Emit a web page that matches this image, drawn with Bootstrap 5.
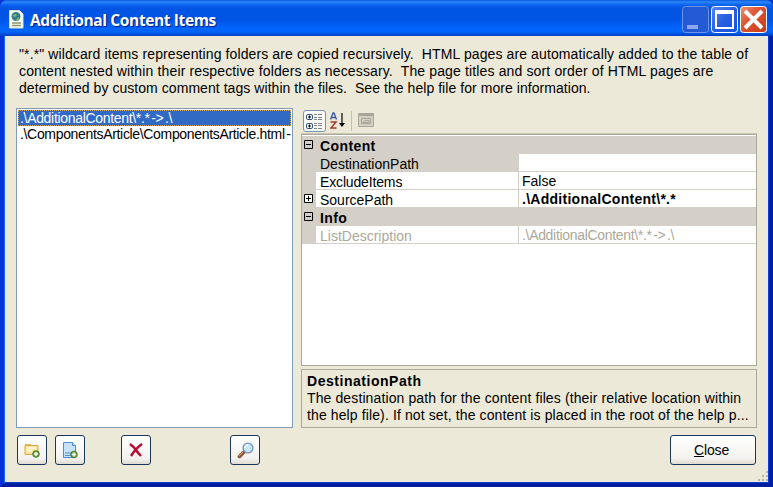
<!DOCTYPE html>
<html lang="en">
<head>
<meta charset="utf-8">
<meta name="viewport" content="width=device-width, initial-scale=1">
<title>Additional Content Items</title>
<link href="https://cdn.jsdelivr.net/npm/bootstrap@5.3.0/dist/css/bootstrap.min.css" rel="stylesheet">
<style>
  body { font: 14px/17px "Liberation Sans", Arial, sans-serif; color: #000; background: #0831d9; overflow: hidden; }
  svg { display: block; flex: none; }
  .dialog-window { width: 773px; height: 487px; background: #ece9d8; border: solid #0831d9; border-width: 0 4px 4px; border-color: #0831d9 #001ea0 #001ea0 #0831d9; border-radius: 7px 7px 0 0; box-shadow: inset 1px 0 #166aee, inset -1px 0 #0c3fd6, inset 0 -1px #0c3fd6; }
  .title-strip { height: 36px; margin: 0 -4px; padding: 0 5px 0 9px; border-radius: 7px 7px 0 0; background: linear-gradient(#0a5ce0 0, #2b85f8 2px, #0b62ee 5px, #0054e3 9px, #0055e5 20px, #0265fd 28px, #0264fa 32px, #0046cf 35px, #003cc4 36px); }
  .title-strip h1 { font: bold 15.5px/20px "Trebuchet MS", "Open Sans", sans-serif; color: #fff; text-shadow: 1px 1px 1px #0a1883; width: 192px; padding-top: 4px; margin-left: 5px; letter-spacing: -.37px; }
  .intro { height: 72px; padding: 10px 0 0 15px; }
  .intro div { height: 17px; white-space: pre; }
  .l1 { letter-spacing: .108px; }
  .l2 { letter-spacing: .14px; }
  .l3 { letter-spacing: .055px; }
  .panes { padding: 0 12px; gap: 8px; height: 320px; }
  .items { width: 277px; border: 1px solid #7f9db9; background: #fff; padding: 1px; }
  .items div { height: 16px; line-height: 16px; padding-left: 2px; white-space: pre; overflow: hidden; }
  .items .chosen { background: #316ac5; color: #fff; outline: 1px dotted #d8a050; outline-offset: -1px; }
  .i1 { letter-spacing: -.32px; word-spacing: -2px; }
  .i2 { letter-spacing: -.33px; word-spacing: -2px; }
  .inspector { width: 456px; }
  .tools { height: 26px; padding: 2px 0 0 2px; border-bottom: 1px solid #c9c6b6; }
  .tool-on { width: 23px; height: 22px; border: 1px solid #7892ae; border-radius: 3px; background: #fafaf7; }
  .tool-sep { width: 1px; height: 20px; background: #c5c2b4; margin: 1px 6px 0 6px; }
  .props { height: 232px; border: 1px solid #aca899; background: #fff; padding-top: 1px; }
  .prop { height: 18px; border-bottom: 1px solid #d4d0c8; }
  .gut { width: 14px; background: #d4d0c8; margin-bottom: -1px; padding: 4px 0 0 2px; }
  .key { width: 203px; padding: 2px 0 0 4px; line-height: 16px; border-right: 1px solid #d4d0c8; overflow: hidden; }
  .val { padding: 1px 0 0 3px; line-height: 16px; }
  .val.fw-bold { letter-spacing: .27px; }
  .shade, .shade .key, .key.shade { background: #d4d0c8; }
  .shade .key { font-weight: bold; letter-spacing: .4px; }
  .tight { letter-spacing: -.15px; }
  .dim { color: #aca899; }
  .help { height: 59px; margin-top: 3px; border: 1px solid #aca899; padding: 3px 0 0 5px; white-space: nowrap; letter-spacing: .115px; }
  .help .fw-bold { letter-spacing: .53px; }
  .actions { height: 37px; padding: 7px 13px 0; }
  .xp { padding: 0; height: 30px; width: 30px; border: 1px solid #17375e; border-radius: 3px; background: linear-gradient(#fff, #f3f2ee 80%, #dedbd0); color: #000; font-size: 14px; line-height: 17px; }
  .gap-a { margin-left: 8px; } .gap-b { margin-left: 36px; } .gap-c { margin-left: 79px; }
  .close-btn { width: 86px; letter-spacing: -.15px; padding-right: 3px; }
  .dialog-window > .grip { margin: 5px 0 0 753px; }
</style>
<script src="https://cdn.jsdelivr.net/npm/bootstrap@5.3.0/dist/js/bootstrap.bundle.min.js"></script>
</head>
<body>
<main class="dialog-window">
  <header class="title-strip d-flex align-items-center">
    <svg class="mt-1" width="16" height="20" viewBox="0 0 16 20"><path d="M.5.500h10l3.500 3.500v14H.5z" fill="#fffff0" stroke="#d9e2c8"/><circle cx="7" cy="6.500" r="4.500" fill="#367d90"/><path d="M4 5q3-2 4 0l-2 2-2-1zm3 4 3-2v2l-2 2z" fill="#70b96b"/><path d="M3 13h9M3 15.500h9" stroke="#8c9470" stroke-width="1.300"/></svg>
    <h1 class="mb-0 text-nowrap">Additional Content Items</h1>
    <svg class="ms-auto mt-1" width="86" height="28" viewBox="0 0 86 28">
      <defs><linearGradient id="blue" x2="1" y2="1"><stop stop-color="#5389ee"/><stop offset=".5" stop-color="#265fe0"/><stop offset="1" stop-color="#1552df"/></linearGradient><linearGradient id="red" x2="1" y2="1"><stop stop-color="#ee9273"/><stop offset=".4" stop-color="#df5434"/><stop offset="1" stop-color="#c63b13"/></linearGradient></defs>
      <rect x=".5" y=".5" width="26" height="26" rx="3" fill="#2359d4" stroke="#6d94ea"/><path d="M5 19h11v4H5z" fill="#8ca9f0"/>
      <rect x="29.500" y=".5" width="26" height="26" rx="3" fill="url(#blue)" stroke="#fff"/><path d="M33 4h19v19H33zM35 8v13h15V8z" fill="#fff" fill-rule="evenodd"/>
      <rect x="58.500" y=".5" width="26" height="26" rx="3" fill="url(#red)" stroke="#fff"/><path d="M63 5l17 17m0-17-17 17" stroke="#fff" stroke-width="4"/>
    </svg>
  </header>
  <section class="intro">
    <div class="l1">"*.*" wildcard items representing folders are copied recursively.  HTML pages are automatically added to the table of</div>
    <div class="l2">content nested within their respective folders as necessary.  The page titles and sort order of HTML pages are</div>
    <div class="l3">determined by custom comment tags within the files.  See the help file for more information.</div>
  </section>
  <div class="panes d-flex">
    <div class="items">
      <div class="chosen i1">.\AdditionalContent\*.* -&gt; .\</div>
      <div class="i2">.\ComponentsArticle\ComponentsArticle.html -</div>
    </div>
    <div class="inspector">
      <div class="tools d-flex">
        <div class="tool-on d-flex align-items-center justify-content-center"><svg width="17" height="17" viewBox="0 0 17 17"><g fill="#fff" stroke="#31517d"><rect x=".5" y="1.500" width="6" height="5" rx="1.500"/><rect x=".5" y="10.500" width="6" height="5" rx="1.500"/></g><path d="M2 4h3M3.500 2.500v3M2 13h3M3.500 11.500v3" stroke="#000"/><path d="M8 1.500h3M8 4.500h3M8 6.500h3M8 10.500h3M8 12.500h3M8 15.500h3M12 1.500h4M12 4.500h4M12 6.500h4M12 10.500h4M12 12.500h4M12 15.500h4" stroke="#858585"/></svg></div>
        <svg class="ms-1" width="15" height="19" viewBox="0 -2 15 19"><path d="M.5 7.500 3 1h1l2.500 6.500M1.500 5.500h4" fill="none" stroke="#3b55a5" stroke-width="1.300"/><path d="M.5 10H6l-5 6h5.500" fill="none" stroke="#a33b32" stroke-width="1.500"/><path d="M12 1v11" stroke="#000" stroke-width="1.200"/><path d="M9 11h6l-3 4z"/></svg>
        <div class="tool-sep"></div>
        <svg width="16" height="18" viewBox="0 -1 16 18"><path d="M.5 2.500h15v13H.5z" fill="#d3d0c3" stroke="#aaa799"/><path d="M1 4h14" stroke="#aaa799" stroke-width="2"/><path d="M3.500 7.500h9v5h-9zM5 11.500l2-2h4v2H5" fill="none" stroke="#aaa799"/></svg>
      </div>
      <div class="props">
        <div class="prop shade d-flex"><div class="gut"><svg width="9" height="9"><path d="M.5.500h8v8h-8zM2 4.500h5" fill="none" stroke="#000"/></svg></div><div class="key">Content</div></div>
        <div class="prop d-flex"><div class="gut"></div><div class="key shade">DestinationPath</div><div class="val"></div></div>
        <div class="prop d-flex"><div class="gut"></div><div class="key tight">ExcludeItems</div><div class="val">False</div></div>
        <div class="prop d-flex"><div class="gut"><svg width="9" height="9"><path d="M.5.500h8v8h-8zM2 4.500h5M4.500 2v5" fill="#fff" stroke="#000"/></svg></div><div class="key">SourcePath</div><div class="val fw-bold">.\AdditionalContent\*.*</div></div>
        <div class="prop shade d-flex"><div class="gut"><svg width="9" height="9"><path d="M.5.500h8v8h-8zM2 4.500h5" fill="none" stroke="#000"/></svg></div><div class="key">Info</div></div>
        <div class="prop d-flex dim"><div class="gut"></div><div class="key">ListDescription</div><div class="val i1">.\AdditionalContent\*.* -&gt; .\</div></div>
      </div>
      <div class="help"><div class="fw-bold">DestinationPath</div><div>The destination path for the content files (their relative location within</div><div>the help file). If not set, the content is placed in the root of the help p...</div></div>
    </div>
  </div>
  <footer class="actions d-flex">
    <button class="btn xp d-flex align-items-center justify-content-center" aria-label="Add folder"><svg width="16" height="16" viewBox="0 0 16 16"><path d="M1 3.500h13v9H1z" fill="#fbe5a2" stroke="#dda63c"/><path d="M1 3h6" stroke="#dda63c" stroke-width="1.500"/><path d="M3 6h9M3 8.500h5" stroke="#fffbe5" stroke-width="1.500"/><circle cx="12" cy="12" r="3.300" fill="#72a64b" stroke="#477c2b"/><path d="M10 12h4m-2-2v4" stroke="#fff" stroke-width="1.300"/></svg></button>
    <button class="btn xp gap-a d-flex align-items-center justify-content-center" aria-label="Add file"><svg width="16" height="17" viewBox="0 0 16 17"><path d="M1.500.500h9l3 3v12h-12z" fill="#c6e2ff" stroke="#4f8bd6"/><path d="M10.500.500v3h3" fill="#eef7ff" stroke="#4f8bd6"/><path d="M3 11h8M3 13.500h6" stroke="#4f8bd6"/><circle cx="12" cy="12.500" r="3.300" fill="#72a64b" stroke="#477c2b"/><path d="M10 12.500h4m-2-2v4" stroke="#fff" stroke-width="1.300"/></svg></button>
    <button class="btn xp gap-b d-flex align-items-center justify-content-center" aria-label="Delete"><svg width="14" height="14" viewBox="0 0 14 14"><path d="M1 1q4 3 6 6t5 6M13 1Q7 5 2 13" fill="none" stroke="#b50a30" stroke-width="2.400"/></svg></button>
    <button class="btn xp gap-c d-flex align-items-center justify-content-center" aria-label="Preview"><svg width="17" height="17" viewBox="0 0 17 17"><path d="M2.500 14.500l4.500-4.500" stroke="#8f573e" stroke-width="3.800" stroke-linecap="round"/><path d="M2 14l4-4" stroke="#d1a078"/><circle cx="11" cy="6" r="4.900" fill="#c5e8fb" stroke="#7894b6" stroke-width="1.400"/><path d="M8 6q0-3 3-3" fill="none" stroke="#fff" stroke-width="1.500"/></svg></button>
    <button class="btn xp close-btn ms-auto"><u>C</u>lose</button>
  </footer>
  <svg class="grip" width="12" height="12" viewBox="0 0 12 12"><path d="M9 1h2v2H9zM5 5h2v2H5zM9 5h2v2H9zM1 9h2v2H1zM5 9h2v2H5zM9 9h2v2H9z" fill="#b8b4a2"/></svg>
</main>
</body>
</html>
